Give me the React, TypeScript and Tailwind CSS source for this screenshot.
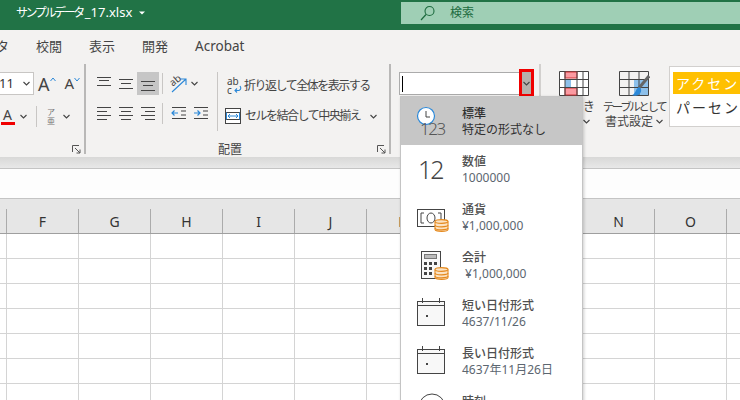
import { ReactNode } from 'react';

const columns = ['', 'F', 'G', 'H', 'I', 'J', 'K', 'L', 'M', 'N', 'O', ''];
const rows = [0, 1, 2, 3, 4, 5, 6];

function Chevron({ className = '' }: { className?: string }) {
  return (
    <svg width="7" height="5" viewBox="0 0 7 5" className={className}>
      <path d="M0.5 1 L3.5 4 L6.5 1" fill="none" stroke="#444" strokeWidth="1.1" />
    </svg>
  );
}

function Launcher() {
  return (
    <svg width="9" height="9" viewBox="0 0 9 9">
      <path d="M0.5 7 V0.5 H7 M3 3 L8 8 M8 4.5 V8 H4.5" fill="none" stroke="#555" strokeWidth="1" />
    </svg>
  );
}

// horizontal text alignment glyph, widths come as x1/x2 pairs
function Lines({ lines }: { lines: [number, number, number][] }) {
  return (
    <svg width="14" height="18" viewBox="0 0 14 18">
      {lines.map(([y, a, b], i) => (
        <line key={i} x1={a} x2={b} y1={y + 0.5} y2={y + 0.5} stroke="#444" strokeWidth="1" />
      ))}
    </svg>
  );
}

function IconBtn({ children, active }: { children: ReactNode; active?: boolean }) {
  return (
    <div className={`flex h-[23px] w-[22px] items-center justify-center ${active ? 'bg-[#c6c6c6]' : ''}`}>
      {children}
    </div>
  );
}

function Indent({ flip }: { flip?: boolean }) {
  return (
    <svg width="16" height="14" viewBox="0 0 16 14">
      {flip ? (
        <>
          <path d="M1 7 H7 M4.5 4.5 L7 7 L4.5 9.5" fill="none" stroke="#2b88d8" strokeWidth="1.2" />
          <path d="M1 1.5 H15 M10 5 H15 M10 9 H15 M1 12.5 H15" stroke="#444" strokeWidth="1" />
        </>
      ) : (
        <>
          <path d="M1 7 H7 M3.5 4.5 L1 7 L3.5 9.5" fill="none" stroke="#2b88d8" strokeWidth="1.2" />
          <path d="M1 1.5 H15 M10 5 H15 M10 9 H15 M1 12.5 H15" stroke="#444" strokeWidth="1" />
        </>
      )}
    </svg>
  );
}

function Coins({ className = '' }: { className?: string }) {
  return (
    <svg width="15" height="15" viewBox="0 0 15 15" className={className}>
      <path
        d="M1 3.5 C1 1 14 1 14 3.5 V11.5 C14 14 1 14 1 11.5 Z"
        fill="#fbe3c4"
        stroke="#e58a1f"
        strokeWidth="1.1"
      />
      <path
        d="M1 3.5 C1 6 14 6 14 3.5 M1 7 C1 9.5 14 9.5 14 7 M1 10 C1 12.5 14 12.5 14 10"
        fill="none"
        stroke="#e58a1f"
        strokeWidth="1.1"
      />
    </svg>
  );
}

function Calendar() {
  return (
    <svg width="30" height="30" viewBox="0 0 30 30">
      <rect x="1.5" y="4.5" width="27" height="24" fill="#f8f8f8" stroke="#444" />
      <path d="M1.5 8.5 H28.5 M6.5 1 V6 M23.5 1 V6" stroke="#444" fill="none" />
      <rect x="10" y="18" width="2" height="2" fill="#444" />
    </svg>
  );
}

function MenuItem({
  label,
  sub,
  icon,
  active,
}: {
  label: string;
  sub: string;
  icon: ReactNode;
  active?: boolean;
}) {
  return (
    <div className={`flex h-[48px] shrink-0 items-center ${active ? 'bg-[#c6c6c6]' : ''}`}>
      <div className="relative ml-[15px] h-[36px] w-[46px] shrink-0">{icon}</div>
      <div className="pt-[1px] text-[12px] leading-[16px]">
        <div className={`font-medium ${active ? 'text-[#303030]' : 'text-[#505050]'}`}>{label}</div>
        <div className={`whitespace-pre ${active ? 'text-[#303030]' : 'text-[#5c6670]'}`}>{sub}</div>
      </div>
    </div>
  );
}

function NumberMenu() {
  return (
    <div className="absolute left-[400px] top-[96px] z-10 flex h-[320px] w-[183px] flex-col border border-[#c4c4c4] bg-white shadow-[1px_1px_3px_rgba(0,0,0,0.2)]">
      <MenuItem
        active
        label="標準"
        sub="特定の形式なし"
        icon={
          <>
            <svg width="20" height="20" viewBox="0 0 20 20" className="absolute left-0 top-[3px]">
              <circle cx="10" cy="10" r="8.5" fill="#fff" stroke="#2b88d8" strokeWidth="1.2" />
              <path d="M10 5 V11 H14" fill="none" stroke="#444" />
            </svg>
            <span className="absolute left-[4px] top-[14px] text-[17px] leading-[24px] tracking-[-1.5px] text-[#555] font-light">
              123
            </span>
          </>
        }
      />
      <MenuItem
        label="数値"
        sub="1000000"
        icon={
          <span className="absolute left-[2px] top-[1px] text-[25px] leading-[34px] tracking-[-2px] text-[#444] font-light">
            12
          </span>
        }
      />
      <MenuItem
        label="通貨"
        sub="¥1,000,000"
        icon={
          <>
            <svg width="28" height="18" viewBox="0 0 28 18" className="absolute left-[1px] top-[10px]">
              <rect x="0.5" y="0.5" width="27" height="17" fill="#fff" stroke="#444" />
              <path d="M7 4 H4 V14 H7 M21 4 H24 V14 H21" fill="none" stroke="#444" />
              <ellipse cx="14" cy="9" rx="4" ry="5" fill="none" stroke="#444" />
            </svg>
            <Coins className="absolute left-[18px] top-[19px]" />
          </>
        }
      />
      <MenuItem
        label="会計"
        sub=" ¥1,000,000"
        icon={
          <>
            <svg width="20" height="28" viewBox="0 0 20 28" className="absolute left-[5px] top-[4px]">
              <rect x="0.5" y="0.5" width="19" height="27" fill="#f8f8f8" stroke="#444" />
              <rect x="3.5" y="3.5" width="12" height="4" fill="#bbb" stroke="#777" />
              <path
                d="M3 11h3v3h-3z M8 11h3v3h-3z M13 11h3v3h-3z M3 16h3v3h-3z M8 16h3v3h-3z M3 21h3v3h-3z M8 21h3v3h-3z"
                fill="#444"
              />
            </svg>
            <Coins className="absolute left-[18px] top-[19px]" />
          </>
        }
      />
      <MenuItem
        label="短い日付形式"
        sub="4637/11/26"
        icon={
          <div className="absolute left-0 top-[2px]">
            <Calendar />
          </div>
        }
      />
      <MenuItem
        label="長い日付形式"
        sub="4637年11月26日"
        icon={
          <div className="absolute left-0 top-[2px]">
            <Calendar />
          </div>
        }
      />
      <MenuItem
        label="時刻"
        sub="12:00:00"
        icon={
          <svg width="28" height="28" viewBox="0 0 28 28" className="absolute left-[2px] top-[2px]">
            <circle cx="14" cy="14" r="13" fill="#fff" stroke="#444" />
          </svg>
        }
      />
    </div>
  );
}

function Ribbon() {
  return (
    <div className="flex h-[95px] shrink-0 bg-[#f3f2f1] text-[12px] text-[#444]">
      {/* font group, cut off by the window edge */}
      <div className="mt-[2px] flex h-[90px] w-[86px] shrink-0 flex-col border-r-2 border-[#b9b8b7] pt-[8px]">
        <div className="flex h-[23px] items-center">
          <div className="flex h-[23px] w-[34px] items-center border border-l-0 border-[#c8c6c4] bg-white text-[13px]">
            <span className="-ml-[1px] text-[#333]">11</span>
            <Chevron className="ml-[9px]" />
          </div>
          <span className="ml-[4px] text-[18px] leading-none">A</span>
          <svg width="6" height="5" viewBox="0 0 6 5" className="mb-[8px]">
            <path d="M0.5 4 L3 1 L5.5 4" fill="none" stroke="#2b88d8" />
          </svg>
          <span className="ml-[9px] text-[15px] leading-none">A</span>
          <svg width="6" height="5" viewBox="0 0 6 5" className="mb-[8px]">
            <path d="M0.5 1 L3 4 L5.5 1" fill="none" stroke="#2b88d8" />
          </svg>
        </div>
        <div className="mt-[9px] flex h-[24px] items-center">
          <div className="flex w-[15px] flex-col items-center">
            <span className="text-[14px] leading-[15px]">A</span>
            <div className="h-[3px] w-[14px] bg-[#f00000]" />
          </div>
          <Chevron className="ml-[5px]" />
          <div className="ml-[9px] h-[21px] w-px bg-[#c8c6c4]" />
          <div className="ml-[10px] flex flex-col items-center text-[8px] leading-[9px] text-[#777]">
            <span>ア</span>
            <span>亜</span>
          </div>
          <Chevron className="ml-[8px]" />
        </div>
        <div className="mt-auto flex justify-end pr-[3px]">
          <Launcher />
        </div>
      </div>

      {/* alignment group */}
      <div className="mt-[2px] flex h-[90px] w-[305px] shrink-0 flex-col border-r-2 border-[#b9b8b7] pt-[8px]">
        <div className="flex">
          <div className="flex w-[131px] shrink-0 flex-col">
            <div className="flex h-[23px] items-center pl-[7px]">
              <IconBtn>
                <Lines lines={[[2, 0, 14], [5, 2, 12], [10, 0, 14]]} />
              </IconBtn>
              <IconBtn>
                <Lines lines={[[4, 0, 14], [8, 2, 12], [13, 0, 14]]} />
              </IconBtn>
              <IconBtn active>
                <Lines lines={[[6, 0, 14], [10, 2, 12], [15, 0, 14]]} />
              </IconBtn>
              <div className="ml-[3px] h-[21px] w-px bg-[#c8c6c4]" />
              <svg width="18" height="20" viewBox="0 0 18 20" className="ml-[7px]">
                <path d="M2 18 L16 5 M10 5 H16 V11" fill="none" stroke="#2b88d8" strokeWidth="1.1" />
                <text x="0" y="11" fontSize="10" fill="#444" transform="rotate(-40 4 8)">
                  ab
                </text>
              </svg>
              <Chevron className="ml-[3px]" />
            </div>
            <div className="mt-[6px] flex h-[24px] items-center pl-[7px]">
              <IconBtn>
                <Lines lines={[[3, 0, 14], [7, 0, 10], [11, 0, 14], [15, 0, 10]]} />
              </IconBtn>
              <IconBtn>
                <Lines lines={[[3, 0, 14], [7, 2, 12], [11, 0, 14], [15, 2, 12]]} />
              </IconBtn>
              <IconBtn>
                <Lines lines={[[3, 0, 14], [7, 4, 14], [11, 0, 14], [15, 4, 14]]} />
              </IconBtn>
              <div className="ml-[3px] h-[21px] w-px bg-[#c8c6c4]" />
              <div className="ml-[8px]">
                <Indent />
              </div>
              <div className="ml-[6px]">
                <Indent flip />
              </div>
            </div>
          </div>
          <div className="h-[59px] w-px shrink-0 bg-[#c8c6c4]" />
          <div className="flex flex-col">
            <div className="flex h-[23px] items-center pl-[8px] pt-[4px]">
              <svg width="18" height="18" viewBox="0 0 18 18">
                <text x="1" y="8" fontSize="10" fill="#444">
                  ab
                </text>
                <text x="1" y="17" fontSize="10" fill="#444">
                  c
                </text>
                <path
                  d="M14 9 Q16 12 13 13.5 H9 M11 11.5 L9 13.5 L11 15.5"
                  fill="none"
                  stroke="#2b88d8"
                  strokeWidth="1.1"
                />
              </svg>
              <span className="whitespace-nowrap text-[12px] leading-none tracking-[-1.5px]">
                折り返して全体を表示する
              </span>
            </div>
            <div className="mt-[6px] flex h-[24px] items-center pl-[7px] pt-[6px]">
              <svg width="16" height="16" viewBox="0 0 16 16">
                <rect x="0.5" y="0.5" width="15" height="15" fill="#fff" stroke="#444" />
                <path d="M0 4.5 H16 M0 11.5 H16" stroke="#444" />
                <path
                  d="M1.5 4.5 V11.5 M14.5 4.5 V11.5 M3 8 H13 M5 6 L3 8 L5 10 M11 6 L13 8 L11 10"
                  fill="none"
                  stroke="#2b88d8"
                />
              </svg>
              <span className="ml-[4px] whitespace-nowrap text-[12px] leading-none tracking-[-1.5px]">
                セルを結合して中央揃え
              </span>
              <Chevron className="ml-[10px]" />
            </div>
          </div>
        </div>
        <div className="mt-auto flex items-end justify-between pr-[3px]">
          <span className="ml-[132px] text-[12px] leading-[9px]">配置</span>
          <Launcher />
        </div>
      </div>

      {/* number group */}
      <div className="mt-[2px] flex h-[90px] w-[150px] shrink-0 items-start border-r-2 border-[#d2d0ce] pl-[8px] pt-[5px]">
        <div className="mt-[3px] flex h-[23px] w-[121px] shrink-0 items-center border border-[#ababab] bg-white pl-[2px]">
          <div className="h-[16px] w-px bg-black" />
        </div>
        <div className="-ml-px flex h-[28px] w-[15px] shrink-0 items-center justify-center border-[3px] border-[#f00000] bg-[#b6b0ab]">
          <Chevron />
        </div>
      </div>

      {/* style group */}
      <div className="flex flex-1 items-start overflow-hidden">
        <div className="flex w-[60px] shrink-0 flex-col items-center pt-[9px]">
          <svg width="30" height="25" viewBox="0 0 30 25" className="ml-[6px]">
            <path d="M0.5 0.5 H29.5 V24.5 H0.5 Z" fill="#fff" stroke="#444" />
            <rect x="6" y="1" width="12" height="6" fill="#fb9aa1" stroke="#d13438" />
            <rect x="6" y="8" width="6" height="8" fill="#8dc0ea" />
            <rect x="6" y="17" width="12" height="7" fill="#fb9aa1" stroke="#d13438" />
            <path d="M0 8.5 H30 M0 16.5 H30 M6 0 V25 M18 0 V25 M24 0 V25" stroke="#444" fill="none" />
          </svg>
          <span className="mt-[3px] whitespace-nowrap leading-[15px]">条件付き</span>
          <div className="flex items-center gap-[7px] leading-[15px]">
            <span>書式</span>
            <Chevron />
          </div>
        </div>
        <div className="flex w-[66px] shrink-0 flex-col items-center pt-[9px]">
          <svg width="31" height="26" viewBox="0 0 31 26">
            <rect x="15" y="8" width="15" height="16" fill="#8dc0ea" />
            <path d="M0.5 0.5 H29.5 V24.5 H0.5 Z M0 8.5 H30 M0 16.5 H30 M10 0 V25 M20 0 V25" stroke="#444" fill="none" />
            <path d="M30 5 L20 17" stroke="#666" strokeWidth="3" />
            <path d="M20 16 C16 18 17 23 13 24 C18 26 23 23 22 18 Z" fill="#2b88d8" />
          </svg>
          <span className="mt-[2px] whitespace-nowrap text-[11.5px] leading-[15px] tracking-[-2.4px]">
            テーブルとして
          </span>
          <div className="flex items-center gap-[3px] leading-[15px]">
            <span>書式設定</span>
            <Chevron />
          </div>
        </div>
        <div className="ml-[2px] mt-[4px] h-[61px] w-[90px] shrink-0 border border-[#d2d0ce] bg-white pl-[3px] pt-[5px]">
          <div className="flex h-[22px] items-center whitespace-nowrap bg-[#ffc000] pl-[3px] text-[14px] tracking-[2px] text-white">
            アクセント
          </div>
          <div className="mt-[6px] whitespace-nowrap pl-[3px] text-[14px] leading-[16px] tracking-[2px] text-[#333]">
            パーセント
          </div>
        </div>
      </div>
    </div>
  );
}

export default function App() {
  return (
    <div className="relative flex h-[400px] w-[740px] flex-col overflow-hidden bg-white font-['Noto_Sans','Noto_Sans_CJK_JP',sans-serif]">
      <div className="flex h-[30px] shrink-0 items-start bg-[#217346] text-white">
        <div className="flex h-[24px] w-[401px] items-center pl-[16px] pt-[1px] text-[13px]">
          <span className="text-[12px] tracking-[-2.4px]">サンプルデータ</span>
          <span className="ml-[2px]">_17.xlsx</span>
          <svg width="6" height="4" viewBox="0 0 6 4" className="ml-[7px]">
            <path d="M0 0.5 H6 L3 3.5 Z" fill="#fff" />
          </svg>
        </div>
        <div className="mt-[2px] flex h-[22px] flex-1 items-center bg-[#9fcfb5] pl-[19px] text-[12px] text-[#1c6b3e]">
          <svg width="16" height="16" viewBox="0 0 16 16">
            <circle cx="9.5" cy="6" r="4.5" fill="none" stroke="#1c6b3e" strokeWidth="1.1" />
            <path d="M6 9.5 L1 15" stroke="#1c6b3e" strokeWidth="1.2" />
          </svg>
          <span className="ml-[14px]">検索</span>
        </div>
      </div>

      <div className="-ml-[4px] flex h-[32px] shrink-0 items-center gap-[27px] bg-[#f3f2f1] pt-[1px] text-[13px] text-[#444]">
        <span>タ</span>
        <span>校閲</span>
        <span>表示</span>
        <span>開発</span>
        <span className="text-[13.5px]">Acrobat</span>
      </div>

      <Ribbon />

      <div className="h-[11px] shrink-0 bg-gradient-to-b from-[#d8d8d7] to-[#e8e8e8]" />
      <div className="h-[31px] shrink-0 border-y border-[#c4c4c4] bg-[#fdfdfd]" />

      <div className="flex h-[35px] shrink-0 items-end border-b border-[#9f9f9f] bg-[#e6e6e6]">
        {columns.map((c, i) => (
          <div
            key={i}
            className={`flex h-[24px] shrink-0 items-center justify-center border-r border-[#ababab] text-[14px] text-[#333] ${
              i === 0 ? 'w-[7px]' : 'w-[72px]'
            }`}
          >
            {c}
          </div>
        ))}
      </div>

      <div className="flex flex-col">
        {rows.map((r) => (
          <div key={r} className="flex h-[25px] shrink-0">
            {columns.map((_, i) => (
              <div
                key={i}
                className={`shrink-0 border-b border-r border-[#d4d4d4] ${i === 0 ? 'w-[7px]' : 'w-[72px]'}`}
              />
            ))}
          </div>
        ))}
      </div>

      <NumberMenu />
    </div>
  );
}
